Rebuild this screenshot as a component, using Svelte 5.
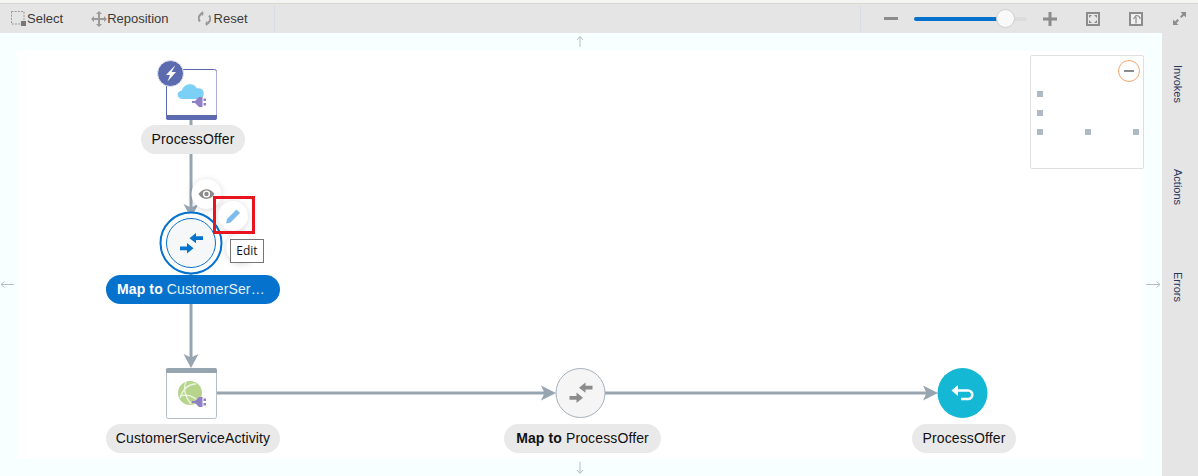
<script>
  const labels = [
    { x: 193, y: 125, w: 104, text: 'ProcessOffer' },
    { x: 193, y: 275, w: 174, bold: 'Map to', text: 'CustomerSer…', selected: true },
    { x: 193, y: 424, w: 174, text: 'CustomerServiceActivity' },
    { x: 582.5, y: 424, w: 157, bold: 'Map to', text: 'ProcessOffer' },
    { x: 964, y: 424, w: 104, text: 'ProcessOffer' }
  ];
  const dots = [[1037, 91], [1037, 110], [1037, 129], [1085, 129], [1133, 129]];
</script>

<div class="page">
  <div class="topline"></div>
  <header class="toolbar">
    <div class="tool first">
      <svg width="16" height="16" viewBox="0 0 16 16">
        <rect x="0.5" y="0.5" width="12.5" height="12.5" fill="none" stroke="#9a9a9a" stroke-dasharray="2 1.2" />
        <rect x="10" y="10" width="5" height="5" fill="#777" />
      </svg>
      <span>Select</span>
    </div>
    <div class="tool second">
      <svg width="16" height="16" viewBox="0 0 16 16" fill="#9a9a9a">
        <path d="M7 3h2v4h4V5l3 3-3 3V9H9v4h2l-3 3-3-3h2V9H3v2L0 8l3-3v2h4V3H5l3-3 3 3H7z" />
      </svg>
      <span>Reposition</span>
    </div>
    <div class="tool third">
      <svg width="13" height="15" viewBox="0 0 13 15" fill="none" stroke="#9a9a9a" stroke-width="2">
        <path d="M2 10.500A5 5 0 0 1 5.500 2.200M11 4.500a5 5 0 0 1-3.500 8.300" />
        <path d="M5 0v5l-3-2.500zM8 15v-5l3 2.500z" fill="#9a9a9a" stroke="none" />
      </svg>
      <span>Reset</span>
    </div>
    <div class="sep"></div>
    <div class="spacer"></div>
    <div class="sep"></div>
    <svg class="ticon minus" width="14" height="14" viewBox="0 0 14 14"><rect y="5" width="14" height="3" fill="#8c8c8c" /></svg>
    <div class="slider">
      <div class="fill"></div>
      <div class="thumb"></div>
    </div>
    <svg class="ticon plus" width="14" height="14" viewBox="0 0 14 14"><path d="M5.500 0h3v5.500H14v3H8.500V14h-3V8.500H0v-3h5.500z" fill="#8c8c8c" /></svg>
    <svg class="ticon fit" width="14" height="14" viewBox="0 0 14 14">
      <rect width="14" height="14" fill="#8c8c8c" />
      <rect x="2" y="2" width="10" height="10" fill="#e8e8e8" />
      <path d="M3 3h3L3 6zM11 3H8l3 3zM3 11h3L3 8zM11 11H8l3-3z" fill="#8c8c8c" />
    </svg>
    <svg class="ticon home" width="14" height="14" viewBox="0 0 14 14">
      <rect width="14" height="14" fill="#8c8c8c" />
      <rect x="2" y="2" width="10" height="10" fill="#f0f0f0" />
      <path d="M7 11.500V5M4.500 7 7 3.500c2 0 4 1 4 3.500" fill="none" stroke="#8c8c8c" stroke-width="1.200" />
    </svg>
    <svg class="ticon expand" width="13" height="13" viewBox="0 0 13 13" fill="#8c8c8c">
      <path d="M7.500 0H13v5.500l-2-2-2.500 2.500L7 4.500 9.500 2zM5.500 13H0V7.500l2 2L4.500 7 6 8.500 3.500 11z" />
    </svg>
  </header>

  <div class="main">
    <section class="canvas">
      <div class="inner"></div>

      <svg class="graph" width="1162" height="443" viewBox="0 33 1162 443">
        <defs>
          <g id="merge">
            <path d="M-1.500-5.300 5-10.500V-7.200H12V-3.400H5V-.2ZM2.500 4.800-4-.4V3H-11V6.800H-4V10Z" />
          </g>
          <g id="plug">
            <path d="M0 4h3l4-4h3.500v10H7L3 6H0z" fill="#8f7fc5" />
            <rect x="11.500" y="1.500" width="2.500" height="2.500" fill="#8f7fc5" />
            <rect x="11.500" y="6" width="2.500" height="2.500" fill="#8f7fc5" />
          </g>
        </defs>

        <!-- navigation arrows -->
        <g fill="none" stroke="#b7bdc2">
          <path d="M580 47V37M577 40l3-3.500 3 3.500" />
          <path d="M580 462v11M577 470l3 3.500 3-3.500" />
          <path d="M1 284.500h13M4.500 281.500 1 284.500l3.500 3" />
          <path d="M1146 284.500h14M1156.500 281.500l3.500 3-3.500 3" />
        </g>

        <!-- edges -->
        <g fill="#97a5b1">
          <rect x="189.500" y="120" width="3" height="90" />
          <path d="M183.500 204l7.500 3.500 7.500-3.500-7.500 14z" />
          <rect x="189.500" y="274" width="3" height="86" />
          <path d="M183.500 354l7.500 3.500 7.500-3.500-7.500 14z" />
          <rect x="216" y="391.500" width="330" height="3" />
          <path d="M541 385.500l3.500 7.500-3.500 7.500 15-7.500z" />
          <rect x="605" y="391.500" width="325" height="3" />
          <path d="M923 385.500l3.500 7.500-3.500 7.500 15-7.500z" />
        </g>

        <!-- trigger node -->
        <rect x="166.500" y="69.500" width="50" height="50" rx="2" fill="#fff" stroke="#5c6bb0" />
        <path d="M216.500 71v44" stroke="#a9afd8" />
        <path d="M166 115h51v3a2 2 0 0 1-2 2h-47a2 2 0 0 1-2-2z" fill="#5c6bb0" />
        <path d="M183 99c-7 0-7-8-1-8.500 1-7 12-9 15-2 6-1 8 4 6 8-1 2-3 2.500-5 2.500z" fill="#7dd0f5" />
        <use href="#plug" x="192" y="97" />
        <circle cx="170.500" cy="73.500" r="13" fill="#5c6bb0" stroke="#e4e6f3" />
        <path d="M174.500 66 166 75h4l-2.500 6.500L176 72h-4.500l3.500-6z" fill="#fff" />

        <!-- selected map node -->
        <circle cx="191" cy="243" r="30.500" fill="#fff" stroke="#0572ce" stroke-width="2" />
        <circle cx="191" cy="243" r="24.500" fill="#f5f7f9" stroke="#0572ce" />
        <use href="#merge" x="191" y="243.500" fill="#0572ce" />

        <!-- connector node -->
        <rect x="166.500" y="368.500" width="50" height="50" rx="2" fill="#fff" stroke="#b4bfc8" />
        <path d="M166 373v-3a2 2 0 0 1 2-2h47a2 2 0 0 1 2 2v3z" fill="#97a5b1" />
        <circle cx="190" cy="393" r="12" fill="#b6d48c" />
        <path d="M180 398c3-9 9-14 16-14M186 382c-3 6-1 15 5 22M181 396c6-2 13 0 17 5" fill="none" stroke="#eef5e2" stroke-width="1.300" />
        <use href="#plug" x="192" y="397" />

        <!-- second map node -->
        <circle cx="580.500" cy="393" r="24.500" fill="#f5f5f6" stroke="#a5b1bc" />
        <use href="#merge" x="580.500" y="393" fill="#8c8c8c" />

        <!-- end node -->
        <circle cx="962.500" cy="393" r="25" fill="#14b8d4" />
        <path d="M957 390.500h11a4.200 4.200 0 0 1 0 8.500h-7" fill="none" stroke="#fff" stroke-width="2.600" />
        <path d="M951.500 390.500 958 385v11z" fill="#fff" />

        <!-- action buttons -->
        <g class="halo">
          <circle cx="206.500" cy="194" r="15" fill="#fff" />
          <circle cx="241" cy="248" r="15" fill="#fff" />
          <circle cx="233" cy="216" r="15" fill="#fff" />
        </g>
        <path d="M198.500 194c4-6.500 12-6.500 16 0-4 6.500-12 6.500-16 0z" fill="#8c8c8c" />
        <circle cx="206.500" cy="194" r="3.600" fill="#fff" />
        <circle cx="206.500" cy="194" r="2.200" fill="#8c8c8c" />
        <path d="M226 223.500l1-4.500 9.500-9.500 3.500 3.500-9.500 9.500z" fill="#7dbcec" />
        <rect class="highlight" x="214.500" y="197.500" width="39" height="35" />
      </svg>

      {#each labels as l}
        <div class="label" class:selected={l.selected} style="left:{l.x - l.w / 2}px;top:{l.y - 33}px;width:{l.w}px">
          {#if l.bold}<b>{l.bold}</b>&nbsp;{/if}<span>{l.text}</span>
        </div>
      {/each}

      <div class="tooltip">Edit</div>

      <aside class="minimap">
        <button class="collapse" aria-label="Collapse"><i></i></button>
        {#each dots as d}
          <i class="dot" style="left:{d[0] - 1031}px;top:{d[1] - 56}px"></i>
        {/each}
      </aside>
    </section>

    <nav class="side">
      <span class="tab invokes">Invokes</span>
      <span class="tab actions">Actions</span>
      <span class="tab errors">Errors</span>
    </nav>
  </div>
</div>

<style>
  :global(body) {
    margin: 0;
    background: #fff;
  }
  .page {
    width: 1198px;
    height: 476px;
    display: flex;
    flex-direction: column;
    overflow: hidden;
    font-family: "Liberation Sans", Arial, sans-serif;
  }
  .topline {
    height: 4px;
    box-sizing: border-box;
    border-bottom: 1px solid #d9d6cf;
    background: #f4f4f2;
    flex: none;
  }
  .toolbar {
    height: 29px;
    flex: none;
    display: flex;
    align-items: center;
    background: #e5e5e5;
    color: #3a3a3a;
    font-size: 13px;
  }
  .tool {
    display: flex;
    align-items: center;
  }
  .tool.first { margin-left: 11px; }
  .tool.second { margin-left: 28px; }
  .tool.third { margin-left: 29px; }
  .tool.third span { margin-left: 3px; }
  .sep {
    width: 1px;
    height: 25px;
    background: #d5dde5;
    margin-left: 26px;
  }
  .spacer { flex: 0 0 585px; }
  .toolbar .spacer + .sep { margin-left: 0; }
  .ticon { flex: none; }
  .minus { margin-left: 23px; }
  .slider {
    position: relative;
    width: 113px;
    height: 4px;
    margin-left: 16px;
    border-radius: 2px;
    background: #dcdcdc;
    flex: none;
  }
  .fill {
    width: 87px;
    height: 100%;
    border-radius: 2px;
    background: #0572ce;
  }
  .thumb {
    position: absolute;
    left: 82px;
    top: -8px;
    width: 19px;
    height: 19px;
    box-sizing: border-box;
    border: 1px solid #cfcfcf;
    border-radius: 50%;
    background: #f9f9f9;
  }
  .plus { margin-left: 16px; }
  .fit { margin-left: 29px; }
  .home { margin-left: 29px; }
  .expand { margin-left: 30px; }
  .main {
    flex: 1;
    display: flex;
    min-height: 0;
  }
  .canvas {
    position: relative;
    width: 1162px;
    background: #f8ffff;
  }
  .inner {
    height: 408px;
    margin: 18px 18px 0 17px;
    background: #fff;
  }
  .graph {
    position: absolute;
    left: 0;
    top: 0;
  }
  .halo circle { filter: drop-shadow(0 1px 3px rgba(0, 0, 0, 0.16)); }
  .highlight {
    fill: none;
    stroke: #e8141e;
    stroke-width: 3;
  }
  .label {
    position: absolute;
    height: 29px;
    line-height: 29px;
    box-sizing: border-box;
    border-radius: 15px;
    background: #e9e9e9;
    color: #111;
    font-size: 14px;
    letter-spacing: 0.12px;
    text-align: center;
    white-space: nowrap;
  }
  .label.selected {
    background: #0572ce;
    color: #fff;
    text-align: left;
    padding-left: 11px;
  }
  .label.selected span { color: #e6f1fa; }
  .tooltip {
    position: absolute;
    left: 230px;
    top: 206px;
    width: 34px;
    height: 24px;
    line-height: 22px;
    box-sizing: border-box;
    border: 1px solid #767676;
    background: #fff;
    color: #111;
    font-family: "Open Sans", sans-serif;
    font-size: 12px;
    text-align: center;
  }
  .minimap {
    position: absolute;
    left: 1030px;
    top: 22px;
    width: 114px;
    height: 114px;
    box-sizing: border-box;
    border: 1px solid #dfdfdf;
    border-radius: 2px;
    background: #fff;
  }
  .collapse {
    position: absolute;
    right: 3px;
    top: 4px;
    width: 22px;
    height: 22px;
    padding: 0;
    box-sizing: border-box;
    border: 1px solid #f5a66c;
    border-radius: 50%;
    background: #fff;
    display: flex;
    align-items: center;
    justify-content: center;
  }
  .collapse i {
    display: block;
    width: 10px;
    height: 2px;
    background: #8c8c8c;
  }
  .dot {
    position: absolute;
    width: 6px;
    height: 6px;
    background: #b0bac4;
  }
  .side {
    position: relative;
    flex: 1;
    background: #e5e5e5;
  }
  .tab {
    position: absolute;
    left: 9px;
    writing-mode: vertical-rl;
    color: #26365c;
    font-size: 11px;
    line-height: 14px;
  }
  .invokes { top: 32px; }
  .actions { top: 136px; }
  .errors { top: 239px; }
</style>
